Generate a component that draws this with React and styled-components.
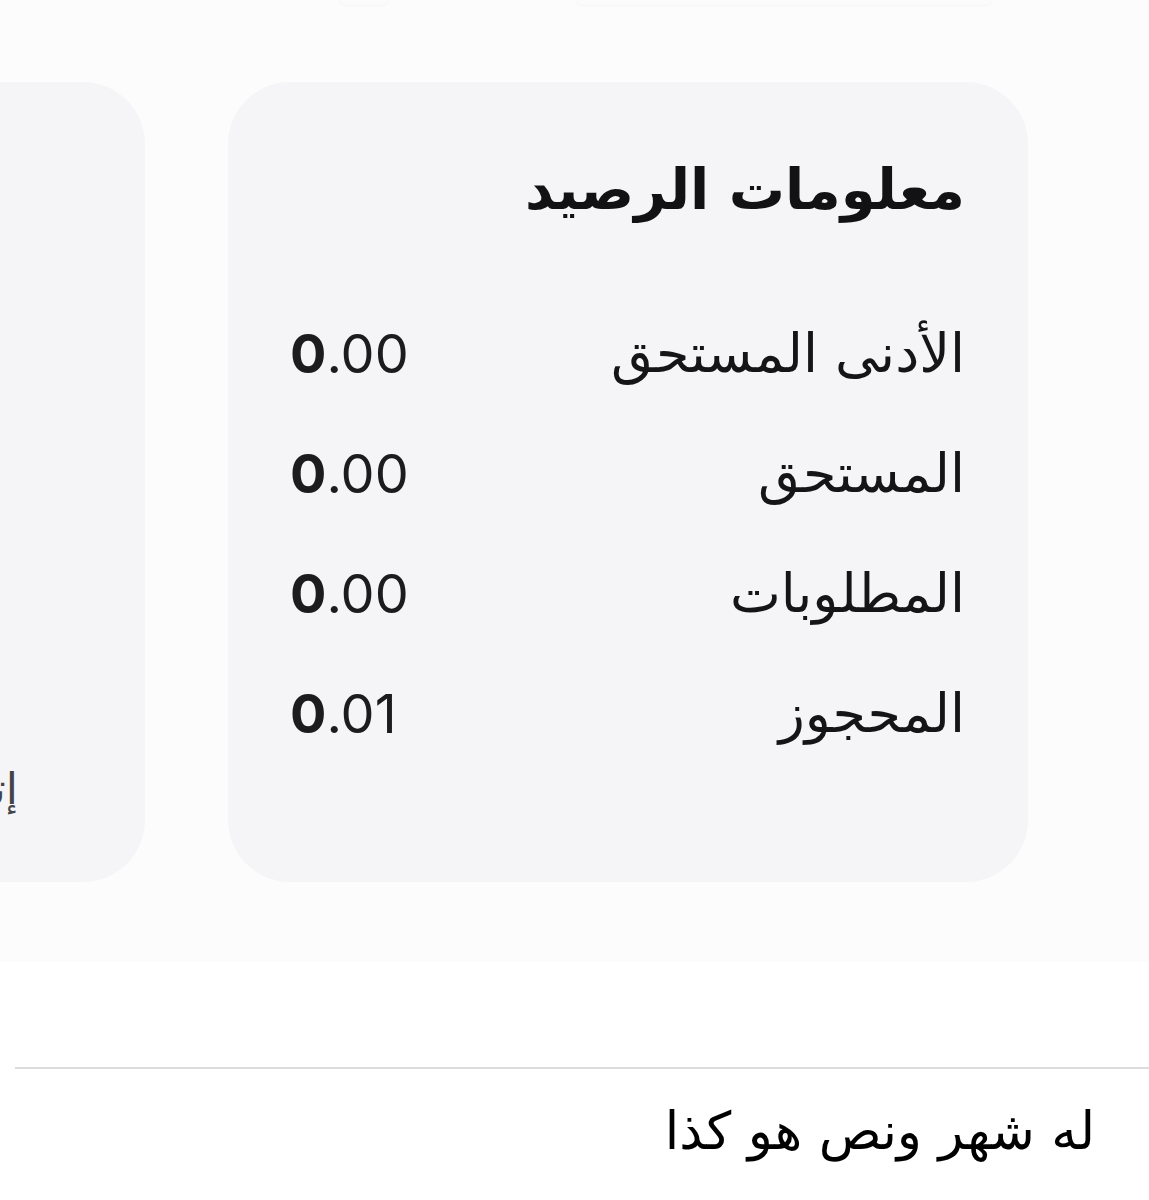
import React from 'react'
import { styled, createGlobalStyle } from 'styled-components'

const Global = createGlobalStyle`
  html, body {
    margin: 0;
    padding: 0;
    background: #ffffff;
  }
  body {
    font-family: "DejaVu Sans", sans-serif;
    color: #111;
    overflow: hidden;
  }
`

const balance = [
  { label: 'الأدنى المستحق', value: '0.00' },
  { label: 'المستحق', value: '0.00' },
  { label: 'المطلوبات', value: '0.00' },
  { label: 'المحجوز', value: '0.01' },
]

function Amount({ value }) {
  const [head, ...rest] = value
  return (
    <Value>
      <b>{head}</b>
      {rest.join('')}
    </Value>
  )
}

export default function App() {
  return (
    <>
      <Global />
      <Page>
        <Band>
          <TopEdge>
            <Stub $w={52} />
            <Stub $w={418} />
          </TopEdge>
          <Carousel>
            <Card>
              <Title>معلومات الرصيد</Title>
              <Rows>
                {balance.map((r) => (
                  <Row key={r.label}>
                    <Label>{r.label}</Label>
                    <Amount value={r.value} />
                  </Row>
                ))}
              </Rows>
            </Card>
            <Card $side>
              <Action>إتمام العملية</Action>
            </Card>
          </Carousel>
        </Band>
        <Thread>
          <Divider />
          <Message>له شهر ونص هو كذا</Message>
        </Thread>
      </Page>
    </>
  )
}

const Page = styled.div`
  width: 1149px;
  height: 1200px;
  overflow: hidden;
  background: #ffffff;
`

const Band = styled.section`
  position: relative;
  height: 962px;
  background: #fcfcfd;
  box-sizing: border-box;
  padding-top: 82px;
  overflow: hidden;
`

const TopEdge = styled.div`
  position: absolute;
  top: -20px;
  left: 0;
  right: 0;
  display: flex;
  gap: 185px;
  padding-left: 338px;
`

const Stub = styled.div`
  width: ${(p) => p.$w}px;
  height: 25px;
  border-radius: 0 0 8px 8px;
  background: #fbfbfc;
  box-shadow: 0 1px 2px rgba(0, 0, 0, 0.03);
`

const Carousel = styled.div`
  direction: rtl;
  display: flex;
  gap: 83px;
  padding-right: 121px;
`

const Card = styled.div`
  flex: 0 0 800px;
  height: 800px;
  box-sizing: border-box;
  border-radius: 62px;
  background: #f5f5f8;
  padding: 62px 63px 0 62px;
  display: flex;
  flex-direction: column;
  ${(p) =>
    p.$side &&
    `
    justify-content: flex-end;
    align-items: flex-start;
    padding-bottom: 68px;
  `}
`

const Title = styled.h2`
  margin: 0;
  font-size: 56px;
  font-weight: 700;
  line-height: 92px;
  color: #121214;
  white-space: nowrap;
`

const Rows = styled.div`
  display: flex;
  flex-direction: column;
  margin-top: 79px;
  gap: 44px;
`

const Row = styled.div`
  display: flex;
  justify-content: space-between;
  align-items: center;
  height: 76px;
`

const Label = styled.span`
  font-size: 54px;
  color: #151517;
  white-space: nowrap;
`

const Value = styled.span`
  direction: ltr;
  font-family: Inter, "Liberation Sans", sans-serif;
  font-size: 54px;
  font-weight: 400;
  color: #1c1c1e;
  b {
    font-weight: 700;
  }
`

const Action = styled.span`
  margin-right: 64px;
  font-size: 44px;
  color: #444448;
  white-space: nowrap;
`

const Thread = styled.div`
  direction: rtl;
  padding: 105px 0 0 15px;
`

const Divider = styled.hr`
  margin: 0;
  border: none;
  border-top: 2px solid #dcdcdc;
`

const Message = styled.p`
  margin: 32px 54px 0 0;
  font-family: "DejaVu Sans", sans-serif;
  font-size: 52px;
  color: #000;
`
